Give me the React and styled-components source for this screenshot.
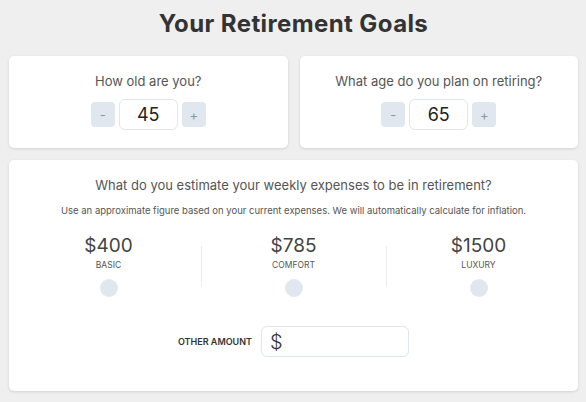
import React, { useState } from 'react';
import styled, { createGlobalStyle } from 'styled-components';

const GlobalStyle = createGlobalStyle`
  html, body {
    margin: 0;
    padding: 0;
    background: #efefef;
    font-family: Inter, "Noto Sans", sans-serif;
    color: #444;
  }
  * { box-sizing: border-box; }
`;

const Page = styled.div`
  padding: 8px 8px 10px 9px;
`;

const Title = styled.h1`
  margin: 0 0 16px;
  text-align: center;
  font-size: 24px;
  line-height: 32px;
  font-weight: 700;
  letter-spacing: 0.4px;
  color: #333;
`;

const Row = styled.div`
  display: grid;
  grid-template-columns: 1fr 1fr;
  gap: 12px;
  margin-bottom: 12px;
`;

const Card = styled.div`
  background: #fff;
  border-radius: 5px;
  box-shadow: 0 1px 3px rgba(0, 0, 0, 0.12);
  padding: ${(p) => p.$pad || '16px 0 18px'};
  text-align: center;
`;

const Question = styled.div`
  font-size: 13px;
  line-height: 18px;
  color: #555;
  margin-bottom: ${(p) => p.$gap || '9px'};
`;

const Stepper = styled.div`
  display: flex;
  justify-content: center;
  align-items: center;
  gap: 4px;
`;

const StepButton = styled.button`
  width: 24px;
  height: 25px;
  border: none;
  border-radius: 4px;
  background: #e1e7ee;
  color: #8a96a3;
  font-family: inherit;
  font-size: 13px;
  padding: 0;
  cursor: pointer;
`;

const NumberBox = styled.input`
  width: 59px;
  height: 31px;
  border: 1px solid #dfe6ee;
  border-radius: 6px;
  text-align: center;
  font-family: inherit;
  font-size: 18px;
  color: #222;
  outline: none;
`;

const Note = styled.div`
  font-size: 9.5px;
  line-height: 12px;
  color: #555;
  margin: 0 0 18px;
`;

const Options = styled.div`
  display: flex;
  padding: 0 7px;
`;

const Option = styled.label`
  flex: 1;
  display: flex;
  flex-direction: column;
  align-items: center;
  position: relative;
  cursor: pointer;
  &:not(:first-child)::before {
    content: '';
    position: absolute;
    left: 0;
    top: 11px;
    height: 41px;
    border-left: 1px solid #ececec;
  }
`;

const Price = styled.div`
  font-size: 19px;
  line-height: 22px;
  color: #444;
`;

const Tier = styled.div`
  font-size: 8.5px;
  line-height: 12px;
  text-transform: uppercase;
  color: #555;
  margin: 2px 0 8px;
`;

const Dot = styled.span`
  width: 18px;
  height: 18px;
  border-radius: 50%;
  background: ${(p) => (p.$on ? '#9fb2c6' : '#e1e7ee')};
`;

const Other = styled.div`
  display: flex;
  justify-content: center;
  align-items: center;
  gap: 9px;
  margin-top: 29px;
`;

const OtherLabel = styled.span`
  font-size: 9px;
  font-weight: 600;
  color: #333;
  text-transform: uppercase;
`;

const AmountBox = styled.div`
  width: 148px;
  height: 31px;
  border: 1px solid #dfe6ee;
  border-radius: 6px;
  display: flex;
  align-items: center;
  padding-left: 8px;
  font-size: 20px;
  font-weight: 300;
  color: #333;
`;

const AmountInput = styled.input`
  flex: 1;
  min-width: 0;
  border: none;
  outline: none;
  font-family: inherit;
  font-size: 16px;
  background: transparent;
`;

const Counter = ({ label, value, onChange }) => (
  <Card>
    <Question>{label}</Question>
    <Stepper>
      <StepButton onClick={() => onChange(value - 1)}>-</StepButton>
      <NumberBox value={value} onChange={(e) => onChange(Number(e.target.value) || 0)} />
      <StepButton onClick={() => onChange(value + 1)}>+</StepButton>
    </Stepper>
  </Card>
);

const tiers = [
  { price: 400, name: 'Basic' },
  { price: 785, name: 'Comfort' },
  { price: 1500, name: 'Luxury' },
];

export default function App() {
  const [age, setAge] = useState(45);
  const [retire, setRetire] = useState(65);
  const [tier, setTier] = useState(null);

  return (
    <Page>
      <GlobalStyle />
      <Title>Your Retirement Goals</Title>
      <Row>
        <Counter label="How old are you?" value={age} onChange={setAge} />
        <Counter label="What age do you plan on retiring?" value={retire} onChange={setRetire} />
      </Row>
      <Card $pad="16px 0 34px">
        <Question $gap="11px">What do you estimate your weekly expenses to be in retirement?</Question>
        <Note>Use an approximate figure based on your current expenses. We will automatically calculate for inflation.</Note>
        <Options>
          {tiers.map((t) => (
            <Option key={t.name} onClick={() => setTier(t.name)}>
              <Price>${t.price}</Price>
              <Tier>{t.name}</Tier>
              <Dot $on={tier === t.name} />
            </Option>
          ))}
        </Options>
        <Other>
          <OtherLabel>Other amount</OtherLabel>
          <AmountBox>
            $<AmountInput />
          </AmountBox>
        </Other>
      </Card>
    </Page>
  );
}
